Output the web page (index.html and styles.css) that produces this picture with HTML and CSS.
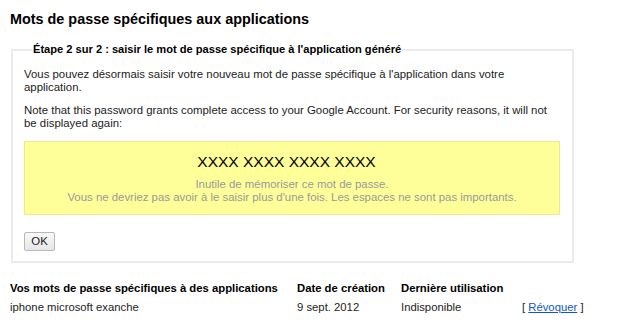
FILE: index.html
```html
<!DOCTYPE html>
<html lang="fr">
<head>
<meta charset="utf-8">
<link rel="stylesheet" href="styles.css">
</head>
<body>
<h1 class="title">Mots de passe spécifiques aux applications</h1>
<fieldset class="step">
  <legend class="step-legend">Étape 2 sur 2 : saisir le mot de passe spécifique à l'application généré</legend>
  <p class="para">Vous pouvez désormais saisir votre nouveau mot de passe spécifique à l'application dans votre application.</p>
  <p class="para">Note that this password grants complete access to your Google Account. For security reasons, it will not be displayed again:</p>
  <div class="pw-box">
    <div class="pw">xxxx xxxx xxxx xxxx</div>
    <div class="pw-note">Inutile de mémoriser ce mot de passe.<br>Vous ne devriez pas avoir à le saisir plus d'une fois. Les espaces ne sont pas importants.</div>
  </div>
  <button class="ok" type="button">OK</button>
</fieldset>
<table class="list">
  <thead>
    <tr>
      <th class="c-name">Vos mots de passe spécifiques à des applications</th>
      <th class="c-date">Date de création</th>
      <th class="c-last">Dernière utilisation</th>
      <th class="c-act"></th>
    </tr>
  </thead>
  <tbody>
    <tr>
      <td>iphone microsoft exanche</td>
      <td>9 sept. 2012</td>
      <td>Indisponible</td>
      <td class="c-act">[ <a href="#" class="revoke">Révoquer</a> ]</td>
    </tr>
  </tbody>
</table>
</body>
</html>
```
FILE: styles.css
```css
html, body {
  margin: 0;
  padding: 0;
  background: #fff;
}
body {
  font-family: "Liberation Sans", Arial, sans-serif;
  font-size: 11.4px;
  color: #222;
  padding: 0 10px;
}
.title {
  font-size: 14.4px;
  font-weight: bold;
  color: #000;
  margin: 10px 0 0 0;
  line-height: 18px;
}
.step {
  box-sizing: border-box;
  width: 563px;
  margin: 15px 0 0 1px;
  border: 2px solid #ebebeb;
  padding: 1px 12px 10px 11px;
}
.step-legend {
  font-weight: bold;
  font-size: 11.1px;
  line-height: 13px;
  color: #000;
  padding: 0 1px;
  margin-left: 8px;
}
.para {
  margin: 11px 0 10px 0;
  line-height: 13px;
}
.para + .para {
  margin-top: 0;
}
.pw-box {
  background: #ffff99;
  border: 1px solid #f0e88c;
  margin: 11px 0 17px 0;
  padding: 10px 10px 10px;
  text-align: center;
}
.pw {
  font-size: 15.5px;
  text-transform: uppercase;
  color: #000;
  line-height: 20px;
  margin-bottom: 6px;
  padding-right: 11px;
}
.pw-note {
  color: #999;
  font-size: 11.4px;
  line-height: 13px;
}
.ok {
  display: block;
  box-sizing: border-box;
  width: 31px;
  height: 19px;
  font-family: "Liberation Sans", Arial, sans-serif;
  font-size: 11.4px;
  color: #222;
  background: linear-gradient(#f9f9f9, #e6e6e6);
  border: 1px solid #b8b8b8;
  border-radius: 2px;
  padding: 0;
  line-height: 17px;
}
.list {
  border-collapse: collapse;
  margin-top: 16px;
  font-size: 11.3px;
}
.list th {
  text-align: left;
  font-weight: bold;
  color: #000;
  padding: 0;
  height: 18px;
}
.list td {
  padding: 0;
  height: 19px;
}
.c-name { width: 287px; }
.c-date { width: 104px; }
.c-last { width: 121px; }
.c-act { text-align: left; white-space: nowrap; }
.revoke { color: #1155cc; }
```
